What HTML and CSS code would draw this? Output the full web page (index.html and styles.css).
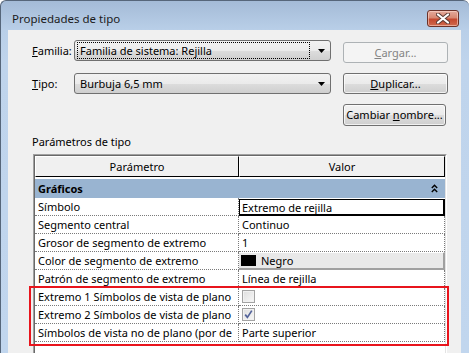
FILE: index.html
```html
<!DOCTYPE html>
<html lang="es">
<head>
<meta charset="utf-8">
<title>Propiedades de tipo</title>
<link rel="stylesheet" href="styles.css">
</head>
<body>
<div class="window">
  <div class="titlebar">
    <span class="title">Propiedades de tipo</span>
    <button class="close" aria-label="Cerrar">
      <svg width="14" height="11" viewBox="0 0 14 11"><path d="M2 1.5 L12 9.5 M12 1.5 L2 9.5" stroke="#5a3a34" stroke-width="4" stroke-linecap="round"/><path d="M2 1.5 L12 9.5 M12 1.5 L2 9.5" stroke="#ffffff" stroke-width="2.2" stroke-linecap="round"/></svg>
    </button>
  </div>
  <div class="client">
    <div class="form">
      <label class="lbl"><u>F</u>amilia:</label>
      <div class="combo"><span class="combo-text focus">Familia de sistema: Rejilla</span><svg class="arrow" width="7" height="4" viewBox="0 0 7 4"><path d="M0 0 H7 L3.5 4 Z" fill="#000"/></svg></div>
      <button class="btn btn-top disabled"><u>C</u>argar...</button>

      <label class="lbl"><u>T</u>ipo:</label>
      <div class="combo"><span class="combo-text">Burbuja 6,5 mm</span><svg class="arrow" width="7" height="4" viewBox="0 0 7 4"><path d="M0 0 H7 L3.5 4 Z" fill="#000"/></svg></div>
      <button class="btn"><u>D</u>uplicar...</button>

      <span class="spacer"></span>
      <span class="spacer"></span>
      <button class="btn btn-tall">Cambiar <u>n</u>ombre...</button>
    </div>

    <div class="section-label">Parámetros de tipo</div>

    <div class="grid">
      <div class="grid-inner">
        <div class="head">
          <div class="hc hc1">Parámetro</div>
          <div class="hc hc2">Valor</div>
        </div>
        <div class="group">
          <span class="group-name">Gráficos</span>
          <svg class="collapse" width="7" height="9" viewBox="0 0 7 9"><path d="M0.8 4 L3.5 1.3 L6.2 4 M0.8 8 L3.5 5.3 L6.2 8" fill="none" stroke="#000" stroke-width="1.4"/></svg>
        </div>
        <div class="row"><div class="c1">Símbolo</div><div class="c2 edit">Extremo de rejilla</div></div>
        <div class="row"><div class="c1">Segmento central</div><div class="c2">Continuo</div></div>
        <div class="row"><div class="c1">Grosor de segmento de extremo</div><div class="c2">1</div></div>
        <div class="row"><div class="c1">Color de segmento de extremo</div><div class="c2 colorbtn"><span class="swatch"></span>Negro</div></div>
        <div class="row"><div class="c1">Patrón de segmento de extremo</div><div class="c2">Línea de rejilla</div></div>
        <div class="row"><div class="c1">Extremo 1 Símbolos de vista de plano</div><div class="c2"><span class="cb"></span></div></div>
        <div class="row"><div class="c1">Extremo 2 Símbolos de vista de plano</div><div class="c2"><span class="cb"><svg width="11" height="11" viewBox="0 0 11 11"><path d="M2.2 5.6 L4.4 8.4 L8.8 1.6" fill="none" stroke="#53639a" stroke-width="1.7"/></svg></span></div></div>
        <div class="row"><div class="c1">Símbolos de vista no de plano (por de</div><div class="c2">Parte superior</div></div>
      </div>
    </div>
  </div>
</div>
<div class="highlight"></div>
</body>
</html>
```
FILE: styles.css
```css
* { box-sizing: border-box; }

body {
  margin: 0;
  width: 469px;
  height: 353px;
  overflow: hidden;
  position: relative;
  background: #ffffff;
  font-family: "Noto Sans", "Open Sans", sans-serif;
  font-size: 11px;
  color: #000;
}

.window {
  width: 469px;
  height: 353px;
  border: 1px solid #56667a;
  border-right: 0;
  border-bottom: 0;
  border-radius: 6px 6px 0 0;
  background: linear-gradient(#a4bbd7 0px, #b9cfe8 29px, #bfd4ec 60px, #c1d6ee);
  display: flex;
  flex-direction: column;
}

.titlebar {
  height: 29px;
  flex: none;
  display: flex;
  justify-content: space-between;
  align-items: flex-start;
  padding: 0 10px 0 11px;
}

.title {
  margin-top: 10px;
  line-height: 16px;
  font-size: 11.5px;
  color: #1b1b1b;
}

.close {
  margin-top: 9px;
  width: 32px;
  height: 17px;
  padding: 0;
  border: 1px solid #6b3229;
  border-radius: 3px;
  background: linear-gradient(#e3aa9c 0%, #d88872 45%, #c4482f 55%, #cf6a4f 100%);
  box-shadow: inset 0 0 0 1px rgba(255, 220, 210, 0.55);
  display: flex;
  align-items: center;
  justify-content: center;
}

.client {
  flex: 1;
  margin: 0 8px 0 7px;
  background: #f0f0f0;
  display: flex;
  flex-direction: column;
  min-height: 0;
}

.form {
  display: grid;
  grid-template-columns: 30px 257px 105px;
  grid-template-rows: 23px 21px 22px;
  column-gap: 12px;
  row-gap: 10px;
  padding: 10px 0 0 24px;
}

.lbl {
  align-self: start;
  line-height: 21px;
  white-space: nowrap;
}

.combo {
  height: 21px;
  border: 1px solid #707070;
  border-radius: 3px;
  background: linear-gradient(#f2f2f2 0%, #ebebeb 50%, #dddddd 51%, #cfcfcf 100%);
  display: flex;
  align-items: center;
  padding: 0 5px 0 2px;
  justify-content: space-between;
}

.combo-text {
  flex: 1;
  height: 17px;
  line-height: 15px;
  padding-left: 2px;
  border: 1px solid transparent;
  margin-right: 8px;
  white-space: nowrap;
}

.combo-text.focus {
  border: 1px dotted #000;
}

.arrow { flex: none; }

.btn {
  height: 21px;
  padding: 0;
  border: 1px solid #707070;
  border-radius: 3px;
  background: linear-gradient(#f2f2f2 0%, #ebebeb 50%, #dddddd 51%, #cfcfcf 100%);
  box-shadow: inset 0 0 0 1px rgba(255, 255, 255, 0.7);
  font-family: inherit;
  font-size: 11px;
  color: #000;
  text-align: center;
  line-height: 18px;
}

.btn-top { margin-top: 2px; }
.btn-tall { height: 22px; width: 103px; }

.btn.disabled {
  border-color: #adb2b5;
  background: #f4f4f4;
  box-shadow: none;
  color: #838383;
}

.section-label {
  margin: 8px 0 4px 24px;
  line-height: 16px;
}

.grid {
  margin-left: 25px;
  width: 414px;
  flex: 1;
  min-height: 0;
  border: 1px solid;
  border-color: #a0a0a0 #ffffff #ffffff #a0a0a0;
  border-bottom: 0;
}

.grid-inner {
  height: 100%;
  background: #ffffff;
  border-left: 1px solid #696969;
  border-top: 1px solid #696969;
  border-right: 1px solid #e3e3e3;
  overflow: hidden;
}

.head {
  display: flex;
  height: 21px;
  background: #f0f0f0;
}

.hc {
  height: 21px;
  line-height: 19px;
  text-align: center;
  border-bottom: 1px solid #000;
  border-right: 1px solid #000;
  border-top: 1px solid #ffffff;
  border-left: 1px solid #ffffff;
}

.hc1 { width: 204px; }
.hc2 { width: 206px; }

.group {
  margin-top: 2px;
  height: 19px;
  background: #99b4d1;
  display: flex;
  align-items: center;
  justify-content: space-between;
  padding: 0 7px 0 3px;
}

.group-name {
  font-weight: bold;
  line-height: 19px;
}

.row {
  display: flex;
  height: 18px;
}

.c1, .c2 {
  flex: none;
  height: 18px;
  line-height: 17px;
  padding-left: 3px;
  border-right: 1px dotted #7a7a7a;
  border-bottom: 1px dotted #7a7a7a;
  white-space: nowrap;
  overflow: hidden;
}

.c1 { width: 204px; }

.c2 {
  width: 206px;
  display: flex;
  align-items: center;
}

.c2.edit {
  border: 1px solid #000;
  border-width: 1px 2px 2px 1px;
  margin-top: 1px;
  height: 17px;
  padding-left: 2px;
}

.c2.colorbtn {
  background: #e9e9e9;
  border-right: 2px solid #a0a0a0;
  border-bottom: 2px solid #a0a0a0;
  border-top: 1px solid #ffffff;
  padding-left: 2px;
  line-height: 15px;
}

.swatch {
  width: 15px;
  height: 11px;
  background: #000;
  margin-right: 5px;
  flex: none;
}

.cb {
  width: 13px;
  height: 13px;
  border: 1px solid #a3a3a3;
  background: linear-gradient(135deg, #dedede, #f8f8f8);
  box-shadow: inset 0 0 0 1px #f1f1f1;
  display: flex;
  align-items: center;
  justify-content: center;
  flex: none;
}

.highlight {
  position: absolute;
  left: 29px;
  top: 286px;
  width: 420px;
  height: 60px;
  border: 2px solid #e8141c;
  pointer-events: none;
}
```
